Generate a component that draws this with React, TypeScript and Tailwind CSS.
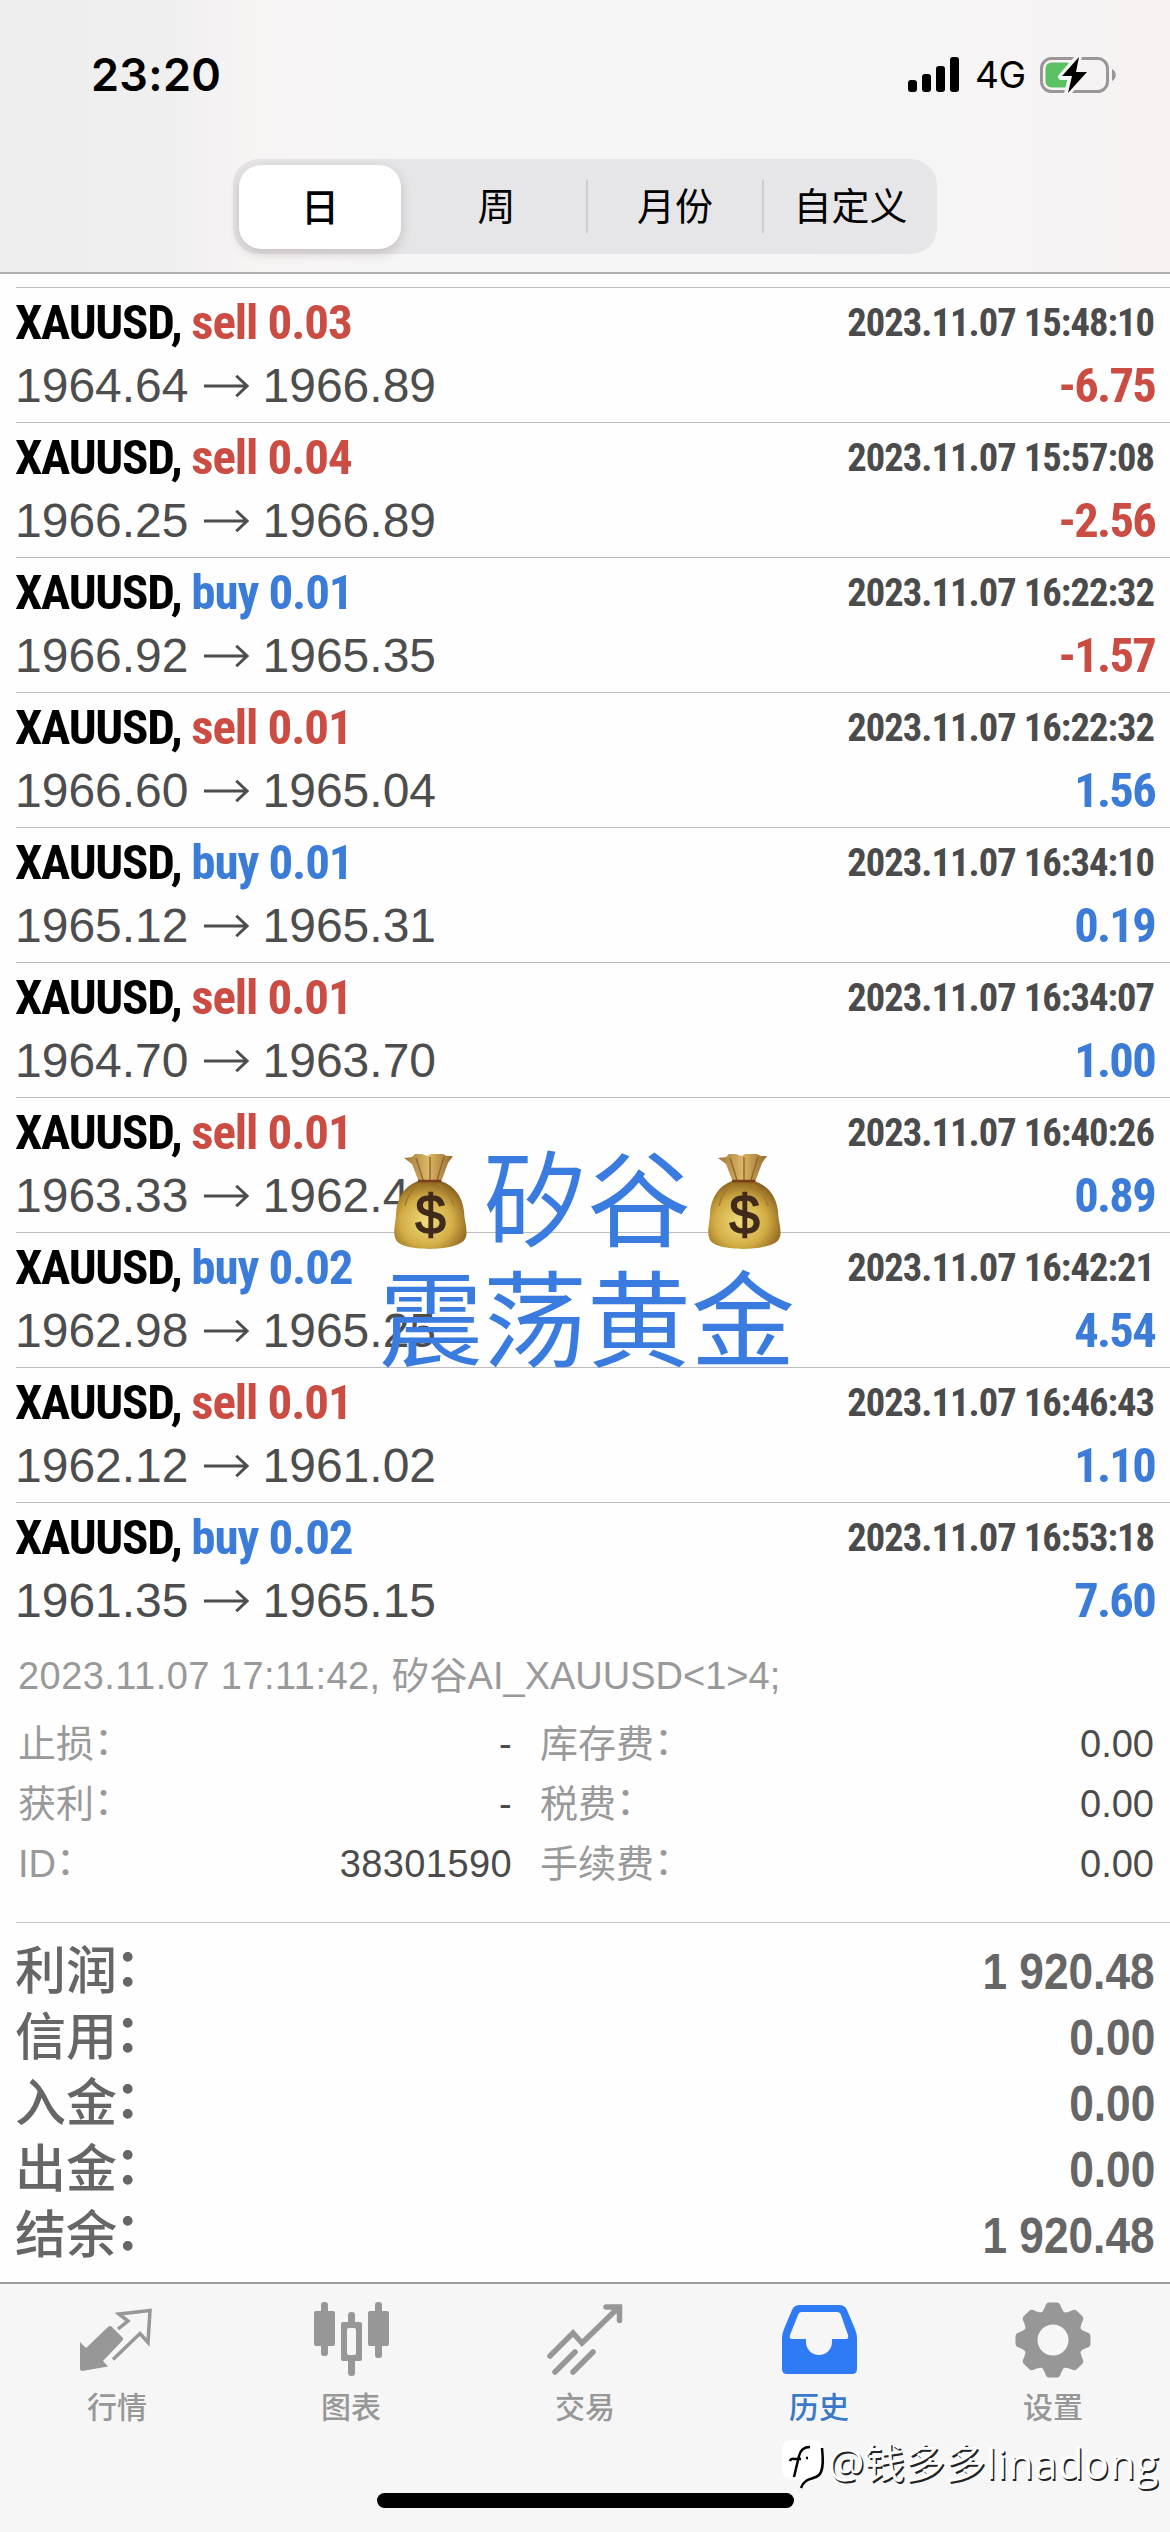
import type { ReactNode } from 'react'

type Deal = {
  side: 'sell' | 'buy'
  lots: string
  open: string
  close: string
  time: string
  profit: string
}

const deals: Deal[] = [
  { side: 'sell', lots: '0.03', open: '1964.64', close: '1966.89', time: '2023.11.07 15:48:10', profit: '-6.75' },
  { side: 'sell', lots: '0.04', open: '1966.25', close: '1966.89', time: '2023.11.07 15:57:08', profit: '-2.56' },
  { side: 'buy', lots: '0.01', open: '1966.92', close: '1965.35', time: '2023.11.07 16:22:32', profit: '-1.57' },
  { side: 'sell', lots: '0.01', open: '1966.60', close: '1965.04', time: '2023.11.07 16:22:32', profit: '1.56' },
  { side: 'buy', lots: '0.01', open: '1965.12', close: '1965.31', time: '2023.11.07 16:34:10', profit: '0.19' },
  { side: 'sell', lots: '0.01', open: '1964.70', close: '1963.70', time: '2023.11.07 16:34:07', profit: '1.00' },
  { side: 'sell', lots: '0.01', open: '1963.33', close: '1962.44', time: '2023.11.07 16:40:26', profit: '0.89' },
  { side: 'buy', lots: '0.02', open: '1962.98', close: '1965.25', time: '2023.11.07 16:42:21', profit: '4.54' },
  { side: 'sell', lots: '0.01', open: '1962.12', close: '1961.02', time: '2023.11.07 16:46:43', profit: '1.10' },
  { side: 'buy', lots: '0.02', open: '1961.35', close: '1965.15', time: '2023.11.07 16:53:18', profit: '7.60' },
]

const details = [
  ['止损', '-', '库存费', '0.00'],
  ['获利', '-', '税费', '0.00'],
  ['ID', '38301590', '手续费', '0.00'],
]

const totals = [
  ['利润', '1 920.48'],
  ['信用', '0.00'],
  ['入金', '0.00'],
  ['出金', '0.00'],
  ['结余', '1 920.48'],
]

const StatusBar = () => (
  <div className="flex h-[60px] items-center pl-[91px] pr-[54px]">
    <span className="font-['Inter'] text-[45px] leading-[60px] font-semibold tracking-[0.3px]">23:20</span>
    <svg className="ml-auto" width="52" height="36" viewBox="0 0 52 36">
      <rect x="0" y="23" width="9" height="12" rx="3" />
      <rect x="14" y="17" width="9" height="18" rx="3" />
      <rect x="28" y="9" width="9" height="26" rx="3" />
      <rect x="42" y="0" width="9" height="35" rx="3" />
    </svg>
    <span className="ml-[15px] w-[50px] font-['Inter'] text-[37px] leading-[60px] tracking-[-0.5px]">4G</span>
    <svg className="ml-[15px]" width="76" height="40" viewBox="0 0 76 40">
      <rect x="1.5" y="3.5" width="66" height="33" rx="10" fill="none" stroke="#9b9799" strokeWidth="3" />
      <path d="M72 14c5 2 5 10 0 12z" fill="#9b9799" />
      <rect x="5.500" y="7.500" width="27" height="25" rx="6" fill="#5cc163" />
      <path d="M39 1L21 22h10l-4 17 20-22H36z" stroke="#f6f4f5" strokeWidth="6" strokeLinejoin="round" fill="#f6f4f5" />
      <path d="M39 2L22 21h10l-4 17 19-21H36z" fill="#000" />
    </svg>
  </div>
)

const Segments = () => (
  <div className="mx-auto mt-[54px] flex h-[95px] w-[704px] items-center rounded-[26px] bg-[#e6e5e7] font-['Liberation_Sans','Noto_Sans_CJK_SC',sans-serif] text-[38px]">
    <div className="ml-[6px] h-[84px] w-[162px] rounded-[22px] bg-white text-center leading-[86px] font-medium shadow-[0_4px_12px_rgba(80,50,50,0.22)]">日</div>
    <div className="w-[185px] pt-[2px] pl-[6px] text-center">周</div>
    <div className="h-[53px] w-[2px] bg-[#cfced1]" />
    <div className="w-[174px] pt-[2px] text-center">月份</div>
    <div className="h-[53px] w-[2px] bg-[#cfced1]" />
    <div className="w-[173px] pt-[2px] text-center">自定义</div>
  </div>
)

const DealRow = ({ deal }: { deal: Deal }) => {
  const sideColor = deal.side === 'sell' ? 'text-[#cb4c42]' : 'text-[#3b7cd9]'
  const profitColor = deal.profit.startsWith('-') ? 'text-[#cb4c42]' : 'text-[#3b7cd9]'

  return (
    <div className="ml-[16px] h-[135px] border-t-[1.5px] border-[#bdbdbf] pt-[6px] pr-[16px]">
      <div className="flex h-[58px] items-center justify-between font-['Roboto'] font-bold [font-stretch:75%]">
        <span className="-ml-[1px] flex gap-[10px] text-[49px] leading-[58px]">
          <span className="tracking-[-1.3px]">XAUUSD,</span>
          <span className={'tracking-[-1.1px] ' + sideColor}>{deal.side} {deal.lots}</span>
        </span>
        <span className="text-[38.5px] leading-[58px] tracking-[-0.95px] text-[#4b4b4b]">{deal.time}</span>
      </div>
      <div className="mt-1 flex h-[60px] items-center justify-between">
        <span className="-ml-[1px] flex items-center font-['Liberation_Sans'] text-[48px] leading-[60px] text-[#4d4d4d]">
          {deal.open}
          <svg className="mx-[14px]" width="46" height="24" viewBox="0 0 47 24" fill="none" stroke="#4d4d4d" strokeWidth="3">
            <path d="M1 12h43M34 1.500l11 10.500-11 10.500" />
          </svg>
          {deal.close}
        </span>
        <span className={"-mr-[1px] font-['Roboto'] text-[48.5px] leading-[60px] font-bold tracking-[-1.7px] [font-stretch:75%] " + profitColor}>{deal.profit}</span>
      </div>
    </div>
  )
}

const MoneyBag = () => (
  <svg className="mx-[15px]" width="76" height="96" viewBox="0 0 76 96">
    <defs>
      <radialGradient id="bag" cx="0.45" cy="0.6" r="0.6">
        <stop offset="0" stopColor="#f0dc80" />
        <stop offset="0.6" stopColor="#d3ad45" />
        <stop offset="1" stopColor="#8d6420" />
      </radialGradient>
      <linearGradient id="neck" x1="0" x2="1">
        <stop offset="0" stopColor="#a0763a" />
        <stop offset="0.5" stopColor="#dcb766" />
        <stop offset="1" stopColor="#94692c" />
      </linearGradient>
    </defs>
    <path d="M12 4l8-1 3-3h7l5 2 4-2h12l4 2 6 0-5 7-7 19H27L20 10z" fill="url(#neck)" />
    <path d="M24 4l7 22M38 3v23M52 3l-7 23" stroke="#94692c" strokeWidth="1.500" fill="none" />
    <path d="M26 27h23c13 5 21 14 23 30 0 10 5 21 1 28-7 13-63 13-69 1-4-8 0-17 0-27 1-16 9-27 22-32z" fill="url(#bag)" />
    <path d="M28 30c-8 5-13 12-15 22M46 30c8 5 13 12 16 22" stroke="#a47c2e" strokeWidth="1.500" fill="none" />
    <path d="M26 27h23" stroke="#7b3f1b" strokeWidth="2.500" />
    <text x="38.500" y="80" textAnchor="middle" fontSize="55" fontFamily="Liberation Sans" fill="#3f2a1c" stroke="#3f2a1c" strokeWidth="1.500">$</text>
  </svg>
)

const Overlay = () => (
  <div className="absolute top-[1143px] left-[379px] w-[440px] font-['Liberation_Sans','Noto_Sans_CJK_SC',sans-serif] text-[104px] leading-[120px] whitespace-nowrap text-[#3a7be0]">
    <div className="-mt-[3px] -ml-[2px] flex h-[123px] items-center">
      <MoneyBag />
      <span className="pt-[3px]">矽谷</span>
      <MoneyBag />
    </div>
    <div>震荡黄金</div>
  </div>
)

const Tab = ({ label, active, children }: { label: string; active?: boolean; children: ReactNode }) => (
  <div className={'flex flex-1 flex-col items-center ' + (active ? 'text-[#3a78c8]' : 'text-[#979797]')}>
    {children}
    <span className="mt-[10px] text-[30px] leading-[40px] font-medium">{label}</span>
  </div>
)

const TabBar = () => (
  <div className="flex h-[250px] flex-col border-t-2 border-[#9c9c9c] bg-[#f6f6f6] pt-[18px]">
    <div className="flex">
      <Tab label="行情">
        <svg width="74" height="76" viewBox="0 -6 74 76">
          <path d="M0 34l6 6 22-21q2-2 4 0l10 10q2 2 0 4L23 53l5 5.500L2 63q-2 0-2-2z" fill="currentColor" />
          <path d="M38 21l10-8-9-7 31-3.500-2 32-8-9-27 26" fill="none" stroke="currentColor" strokeWidth="3.500" />
        </svg>
      </Tab>
      <Tab label="图表">
        <svg width="75" height="76" viewBox="0 0 75 76" fill="currentColor">
          <rect x="0" y="9" width="21" height="35" rx="2" />
          <rect x="7" y="0" width="7" height="54" rx="3" />
          <path fillRule="evenodd" d="M29 20h17q2 0 2 2v35q0 2-2 2H29q-2 0-2-2V22q0-2 2-2zM35 26q-2 0-2 2v23q0 2 2 2h5q2 0 2-2V28q0-2-2-2z" />
          <rect x="34" y="10" width="7" height="14" rx="3" />
          <rect x="34" y="56" width="7" height="18" rx="3" />
          <rect x="54" y="9" width="21" height="35" rx="2" />
          <rect x="61" y="0" width="7" height="56" rx="3" />
        </svg>
      </Tab>
      <Tab label="交易">
        <svg width="76" height="76" viewBox="0 -2 76 76" fill="none" stroke="currentColor" strokeWidth="5.500" strokeLinecap="round">
          <path d="M3 52l23-23 9 10L71 4M59 3h13.500v13.500M8 68l20-20M26 68l20-20" />
        </svg>
      </Tab>
      <Tab label="历史" active>
        <svg width="75" height="76" viewBox="0 -3 75 76">
          <path
            fillRule="evenodd"
            fill="#2f7af5"
            d="M18 0h39q6 0 8 5l8 19q2 5 2 9v31q0 5-5 5H5q-5 0-5-5V33q0-4 2-9L10 5q2-5 8-5zM20 7q-3 0-4 3L8 30q-1 4 2 4h14v3a13 13 0 0 0 26 0v-3h14q3 0 2-4L59 10q-1-3-4-3z"
          />
        </svg>
      </Tab>
      <Tab label="设置">
        <svg width="76" height="76" viewBox="-38 -38 76 76">
          <circle r="22.500" fill="none" stroke="currentColor" strokeWidth="14" />
          {[0, 45, 90, 135, 180, 225, 270, 315].map((a) => (
            <path key={a} transform={`rotate(${a})`} d="M-13-26q3-2 5-7 1-4.500 4-4.500h8q3 0 4 4.500 2 5 5 7z" fill="currentColor" />
          ))}
        </svg>
      </Tab>
    </div>
    <div className="mx-auto mt-[65px] h-[15px] w-[417px] rounded-full bg-black" />
  </div>
)

const Signature = () => (
  <div className="absolute top-[2436px] left-[782px] flex items-center whitespace-nowrap">
    <svg width="44" height="54" viewBox="0 0 44 54">
      <path d="M11 4h19q11 0 11 11v17q0 10-11 11l-8 1q-3 3-3 7v-7h-8Q0 43 0 32V15Q0 4 11 4z" fill="#fff" />
      <path d="M40 12c1 10 2 22-3 27-4 4-9 3-13 6-3 2-4 4-5 7M12 41l5-21q2-9 11-9M8 25q1-3 4-2l7 0M24 22h2" fill="none" stroke="#000" strokeWidth="2.500" />
    </svg>
    <span className="ml-[2px] flex font-['Open_Sans','Noto_Sans_CJK_SC',sans-serif] text-[40.5px] leading-[54px] text-white [text-shadow:1.5px_1.5px_0.5px_#222]">
      @钱多多<span className="text-[42px] tracking-[0.4px]">linadong</span>
    </span>
  </div>
)

export default function App() {
  return (
    <div className="relative flex h-[2532px] w-[1170px] flex-col overflow-hidden bg-[#fefefe] font-['Liberation_Sans','Noto_Sans_CJK_SC',sans-serif] text-black">
      <header className="h-[274px] border-b-2 border-[#b0b0b2] bg-[linear-gradient(90deg,#eeeeee_0%,#f0efef_14%,#f7f4f4_22%,#f6f6f7_38%,#f6f5f6_80%,#f8f2f2_100%)] pt-[45px]">
        <StatusBar />
        <Segments />
      </header>

      <div className="mt-[13px]">
        {deals.map((deal) => (
          <DealRow key={deal.time + deal.side} deal={deal} />
        ))}
      </div>

      <div className="h-[285px] pt-[9px] pr-[16px] pl-[18px] text-[38px] leading-[60px] text-[#999]">
        <p>
          <span className="tracking-[0.45px]">2023.11.07 17:11:42, </span>
          矽谷AI_XAUUSD&lt;1&gt;4;
        </p>
        <div className="mt-2">
          {details.map(([label, value, fee, amount]) => (
            <div key={label} className="flex h-[60px]">
              <span>{label}<span className="relative -top-[3px]">：</span></span>
              <span className="ml-auto tracking-[0.4px] text-[#4b4b4b]">{value}</span>
              <div className="ml-[28px] flex w-[614px] justify-between">
                <span>{fee}<span className="relative -top-[3px]">：</span></span>
                <span className="text-[#4b4b4b]">{amount}</span>
              </div>
            </div>
          ))}
        </div>
      </div>

      <div className="ml-[16px] h-[360px] border-t-[1.5px] border-[#c6c6c8] pt-4 pr-[15px] text-[#666]">
        {totals.map(([label, value]) => (
          <div key={label} className="flex h-[66px] justify-between leading-[66px]">
            <span className="-ml-[1px] text-[51px] font-medium">
              {label}<span className="relative -top-[3px] -left-[2px] font-bold">：</span>
            </span>
            <span className="origin-right scale-x-[0.885] text-[50px] font-bold">{value}</span>
          </div>
        ))}
      </div>

      <TabBar />
      <Overlay />
      <Signature />
    </div>
  )
}
